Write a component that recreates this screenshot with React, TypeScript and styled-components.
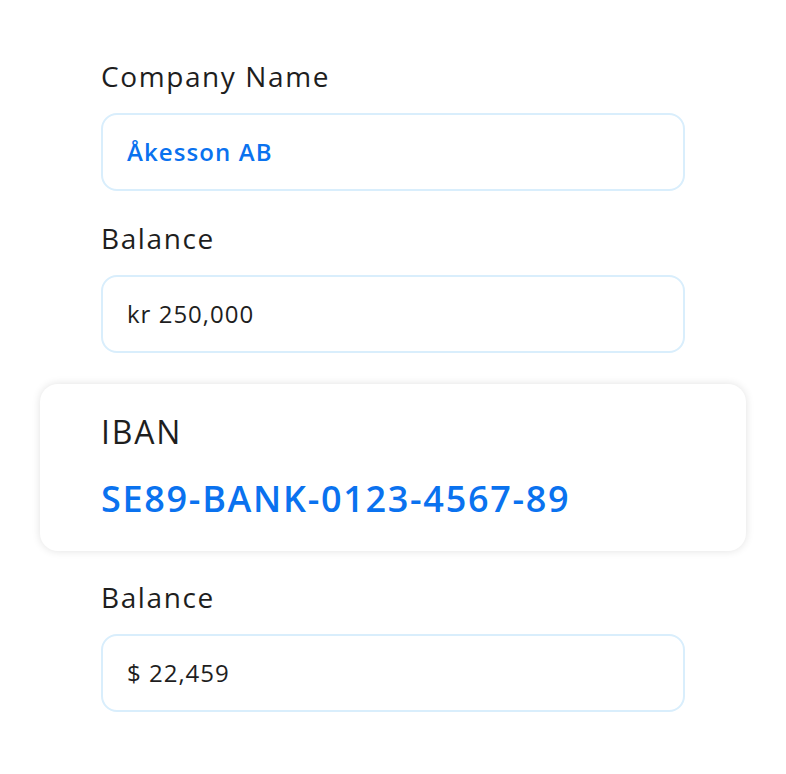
import React from 'react'
import styled, { createGlobalStyle } from 'styled-components'

const GlobalStyle = createGlobalStyle`
  body {
    margin: 0;
    background: #fff;
    font-family: "Open Sans", "Noto Sans", sans-serif;
    color: #1e1e1e;
  }
`

const Page = styled.div`
  width: 786px;
  box-sizing: border-box;
  padding: 60px 0 0 101px;
  display: flex;
  flex-direction: column;
  align-items: flex-start;
`

const Field = styled.div`
  width: 584px;
  margin-bottom: 31px;
  display: flex;
  flex-direction: column;
`

const Label = styled.div`
  font-size: 28px;
  line-height: 32px;
  letter-spacing: 1.6px;
  margin-bottom: 21px;
`

const Input = styled.div<{ accent?: boolean }>`
  box-sizing: border-box;
  height: 78px;
  border: 2px solid #d9eefc;
  border-radius: 16px;
  padding: 0 24px;
  display: flex;
  align-items: center;
  font-size: 24px;
  line-height: 30px;
  letter-spacing: ${props => props.accent ? '1.1px' : '1px'};
  font-weight: ${props => props.accent ? 600 : 400};
  color: ${props => props.accent ? '#0a72ef' : '#1e1e1e'};
`

const Card = styled.div`
  box-sizing: border-box;
  width: 706px;
  margin: 0 0 30px -61px;
  padding: 28px 61px 30px;
  background: #fff;
  border-radius: 18px;
  box-shadow: 0 0 9px rgba(0, 0, 0, 0.12);
`

const CardLabel = styled.div`
  font-size: 32px;
  line-height: 40px;
  letter-spacing: 1.8px;
`

const Iban = styled.div`
  margin-top: 25px;
  font-size: 36px;
  line-height: 44px;
  font-weight: 600;
  letter-spacing: 1.7px;
  color: #0a72ef;
`

export default function App() {
  return (
    <Page>
      <GlobalStyle />
      <Field>
        <Label>Company Name</Label>
        <Input accent>Åkesson AB</Input>
      </Field>
      <Field>
        <Label>Balance</Label>
        <Input>kr 250,000</Input>
      </Field>
      <Card>
        <CardLabel>IBAN</CardLabel>
        <Iban>SE89-BANK-0123-4567-89</Iban>
      </Card>
      <Field>
        <Label>Balance</Label>
        <Input>$ 22,459</Input>
      </Field>
    </Page>
  )
}
